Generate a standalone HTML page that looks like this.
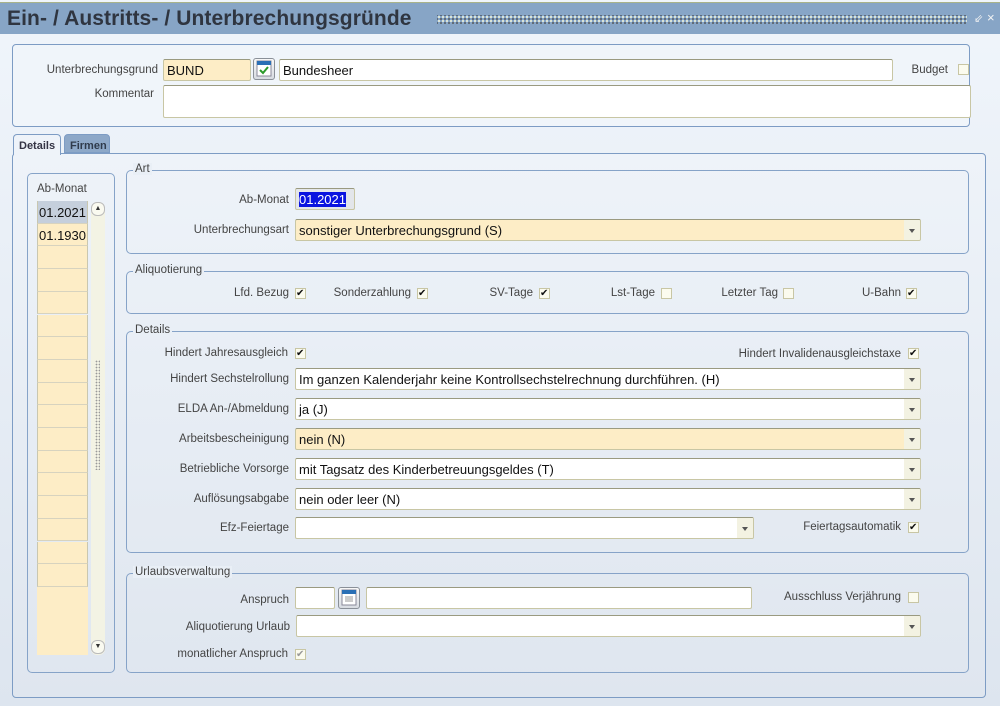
<!DOCTYPE html>
<html><head><meta charset="utf-8"><style>
*{box-sizing:border-box;margin:0;padding:0}
body{width:1000px;height:706px;overflow:hidden;position:relative;font-family:"Liberation Sans",sans-serif;font-size:12px;color:#444;background:linear-gradient(#f0f5fb,#dde5ef)}
.a{position:absolute}
.title{left:0;top:2px;width:1000px;height:32px;background:#87a5c6;border-top:1px solid #a9b38a}
.title h1{position:absolute;left:7px;top:4px;font-size:21px;font-weight:bold;color:#2f3540;letter-spacing:0.1px}
.dots{position:absolute;left:437px;top:12px;width:530px;height:9px;background-image:radial-gradient(circle,#e8edd8 0.9px,transparent 1.2px),radial-gradient(circle,#444 0.7px,transparent 1px);background-size:4px 4px,4px 4px;background-position:0 0,2px 2px}
.panel{border:1px solid #7d9cc4;border-radius:4px}
.grp{border:1px solid #86a3c8;border-radius:5px}
.gl{position:absolute;top:-8px;left:6px;padding:0 2px;color:#444;font-size:11.5px;background:#e9eff6}
.lbl{position:absolute;text-align:right;white-space:nowrap;font-size:11.5px;color:#444}
.in{position:absolute;height:22px;background:#fff;border:1px solid #c8c6a4;border-top-color:#9a9a80;border-radius:2px;font-size:13px;color:#111;padding:3px 0 0 3px;white-space:nowrap;overflow:hidden}
.or{background:#fdedc6}
.dd::after{content:"";position:absolute;right:0;top:0;width:16px;height:20px;background:#f3f2e2}
.dd::before{content:"";position:absolute;right:5px;top:9px;border-left:3px solid transparent;border-right:3px solid transparent;border-top:4px solid #555;z-index:2}
.cb{position:absolute;width:11px;height:11px;background:#fbfbee;border:1px solid #c8c6a4;font-size:11px;line-height:9px;text-align:center;color:#111}
.cb.k::after{content:"✔";position:absolute;left:0;top:0;font-size:10px}
.cb.g{color:#999}
.row{position:absolute;left:37px;width:51px;height:22.7px;background:#fdedc6;border-bottom:1px solid #d7d3bf;border-left:1px solid #c9c7b0;border-right:1px solid #c9c7b0;font-size:13px;color:#111;padding:4px 0 0 1px}
.btn{position:absolute;width:22px;height:22px;border:1px solid #8a9098;border-radius:3px;background:linear-gradient(#f8f8f8,#d8dce2)}
</style></head><body>
<div class="a title"><h1>Ein- / Austritts- / Unterbrechungsgründe</h1><div class="dots"></div>
<div class="a" style="left:974px;top:9px;color:#f4f4f4;font-size:11px">⇙</div><div class="a" style="left:987px;top:7px;color:#f4f4f4;font-size:13px">×</div></div>

<div class="a panel" style="left:12px;top:44px;width:958px;height:83px;background:#f0f5fa"></div>
<div class="lbl" style="right:842px;top:64px">Unterbrechungsgrund</div>
<div class="in or" style="left:163px;top:59px;width:88px">BUND</div>
<div class="btn" style="left:253px;top:58px"><svg width="20" height="20" viewBox="0 0 20 20"><rect x="3" y="2" width="14" height="15" fill="#fff" stroke="#889"/><rect x="3" y="2" width="14" height="4" fill="#2a6fb5"/><path d="M6 11l3 3 5-6" stroke="#2b9a2b" stroke-width="2" fill="none"/></svg></div>
<div class="in" style="left:279px;top:59px;width:614px">Bundesheer</div>
<div class="lbl" style="right:52px;top:64px">Budget</div>
<div class="cb" style="left:958px;top:64px"></div>
<div class="lbl" style="right:846px;top:88px">Kommentar</div>
<div class="in" style="left:163px;top:85px;width:808px;height:33px"></div>

<div class="a" style="left:13px;top:134px;width:48px;height:21px;background:#eef3f9;border:1px solid #7d9cc4;border-bottom:none;border-radius:4px 4px 0 0;font-weight:bold;font-size:11px;color:#334;padding:5px 0 0 5px;z-index:3">Details</div>
<div class="a" style="left:64px;top:134px;width:46px;height:19px;background:#8da8c8;border:1px solid #7d9cc4;border-radius:4px 4px 0 0;font-weight:bold;font-size:11px;color:#2f3b4c;padding:5px 0 0 5px">Firmen</div>
<div class="a panel" style="left:12px;top:153px;width:974px;height:545px;background:linear-gradient(#eef3f9,#dfe6ef)"></div>

<div class="a grp" style="left:27px;top:173px;width:88px;height:500px"></div>
<div class="lbl" style="left:37px;top:183px">Ab-Monat</div>
<div class="a" style="left:91px;top:202px;width:14px;height:453px;background:#f3f3e4;border-radius:6px"></div>
<div class="a" style="left:91px;top:202px;width:14px;height:14px;border:1px solid #bbb;border-radius:6px;background:#fafaf0;font-size:7px;text-align:center;line-height:12px;color:#333">▲</div>
<div class="a" style="left:91px;top:640px;width:14px;height:14px;border:1px solid #bbb;border-radius:6px;background:#fafaf0;font-size:7px;text-align:center;line-height:12px;color:#333">▼</div>
<div class="a" style="left:95px;top:360px;width:5px;height:110px;background-image:radial-gradient(circle,#999 0.7px,transparent 1px);background-size:3px 3px"></div>
<div class="row" style="top:201px;background:#c5cfdc">01.2021</div>
<div class="row" style="top:223.7px">01.1930</div>
<div class="row" style="top:246.4px"></div><div class="row" style="top:269.1px"></div><div class="row" style="top:291.8px"></div><div class="row" style="top:314.5px"></div><div class="row" style="top:337.2px"></div><div class="row" style="top:359.9px"></div><div class="row" style="top:382.6px"></div><div class="row" style="top:405.3px"></div><div class="row" style="top:428px"></div><div class="row" style="top:450.7px"></div><div class="row" style="top:473.4px"></div><div class="row" style="top:496.1px"></div><div class="row" style="top:518.8px"></div><div class="row" style="top:541.5px"></div><div class="row" style="top:564.2px"></div><div class="row" style="top:586.9px;border:none"></div><div class="row" style="top:609.6px;border:none"></div><div class="row" style="top:632.3px;border:none"></div>

<div class="a grp" style="left:126px;top:170px;width:843px;height:84px"><span class="gl">Art</span></div>
<div class="lbl" style="right:711px;top:194px">Ab-Monat</div>
<div class="in" style="left:295px;top:188px;width:60px;background:#e3e6ea"><span style="background:#0a14e0;color:#fff">01.2021</span></div>
<div class="lbl" style="right:711px;top:224px">Unterbrechungsart</div>
<div class="in or dd" style="left:295px;top:219px;width:626px">sonstiger Unterbrechungsgrund (S)</div>

<div class="a grp" style="left:126px;top:271px;width:843px;height:43px"><span class="gl">Aliquotierung</span></div>
<div class="lbl" style="right:711px;top:287px">Lfd. Bezug</div><div class="cb k" style="left:295px;top:288px"></div>
<div class="lbl" style="right:589px;top:287px">Sonderzahlung</div><div class="cb k" style="left:417px;top:288px"></div>
<div class="lbl" style="right:467px;top:287px">SV-Tage</div><div class="cb k" style="left:539px;top:288px"></div>
<div class="lbl" style="right:345px;top:287px">Lst-Tage</div><div class="cb" style="left:661px;top:288px"></div>
<div class="lbl" style="right:222px;top:287px">Letzter Tag</div><div class="cb" style="left:783px;top:288px"></div>
<div class="lbl" style="right:99px;top:287px">U-Bahn</div><div class="cb k" style="left:906px;top:288px"></div>

<div class="a grp" style="left:126px;top:331px;width:843px;height:222px"><span class="gl">Details</span></div>
<div class="lbl" style="right:712px;top:347px">Hindert Jahresausgleich</div><div class="cb k" style="left:295px;top:348px"></div>
<div class="lbl" style="right:99px;top:348px">Hindert Invalidenausgleichstaxe</div><div class="cb k" style="left:908px;top:348px"></div>
<div class="lbl" style="right:711px;top:373px">Hindert Sechstelrollung</div>
<div class="in dd" style="left:295px;top:368px;width:626px">Im ganzen Kalenderjahr keine Kontrollsechstelrechnung durchführen. (H)</div>
<div class="lbl" style="right:711px;top:403px">ELDA An-/Abmeldung</div>
<div class="in dd" style="left:295px;top:398px;width:626px">ja (J)</div>
<div class="lbl" style="right:711px;top:433px">Arbeitsbescheinigung</div>
<div class="in or dd" style="left:295px;top:428px;width:626px">nein (N)</div>
<div class="lbl" style="right:711px;top:463px">Betriebliche Vorsorge</div>
<div class="in dd" style="left:295px;top:458px;width:626px">mit Tagsatz des Kinderbetreuungsgeldes (T)</div>
<div class="lbl" style="right:711px;top:493px">Auflösungsabgabe</div>
<div class="in dd" style="left:295px;top:488px;width:626px">nein oder leer (N)</div>
<div class="lbl" style="right:711px;top:522px">Efz-Feiertage</div>
<div class="in dd" style="left:295px;top:517px;width:459px"></div>
<div class="lbl" style="right:99px;top:521px">Feiertagsautomatik</div><div class="cb k" style="left:908px;top:522px"></div>

<div class="a grp" style="left:126px;top:573px;width:843px;height:100px"><span class="gl">Urlaubsverwaltung</span></div>
<div class="lbl" style="right:711px;top:594px">Anspruch</div>
<div class="in" style="left:295px;top:587px;width:40px"></div>
<div class="btn" style="left:338px;top:587px"><svg width="20" height="20" viewBox="0 0 20 20"><rect x="3" y="2" width="14" height="15" fill="#fff" stroke="#889"/><rect x="3" y="2" width="14" height="4" fill="#2a6fb5"/><path d="M6 9h8M6 11h8M6 13h8" stroke="#999"/></svg></div>
<div class="in" style="left:366px;top:587px;width:386px"></div>
<div class="lbl" style="right:99px;top:591px">Ausschluss Verjährung</div><div class="cb" style="left:908px;top:592px"></div>
<div class="lbl" style="right:710px;top:621px">Aliquotierung Urlaub</div>
<div class="in dd" style="left:296px;top:615px;width:625px"></div>
<div class="lbl" style="right:712px;top:648px">monatlicher Anspruch</div><div class="cb k g" style="left:295px;top:649px"></div>
</body></html>
